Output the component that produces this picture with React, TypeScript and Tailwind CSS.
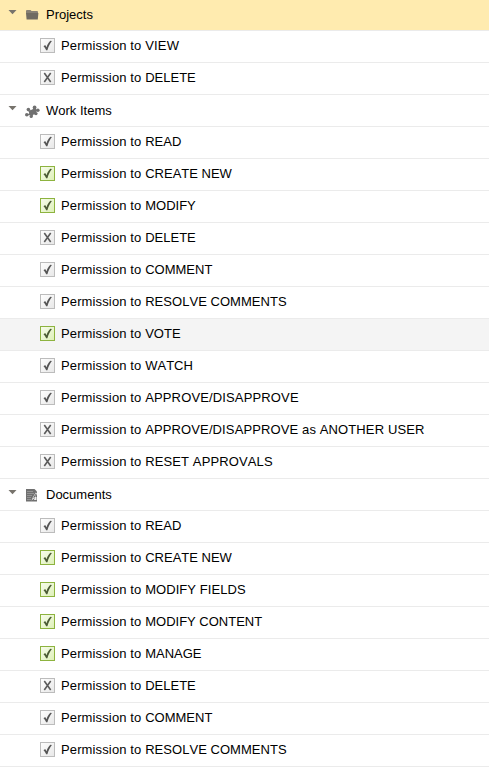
import React from "react";

type State = "check" | "granted" | "denied";
type Item = { label: string; state: State; hover?: boolean; tracking?: string };
type Group = { name: string; icon: React.ReactNode; selected?: boolean; items: Item[] };

function FolderIcon() {
  return (
    <svg width="16" height="14" viewBox="0 0 16 14" className="block">
      <path d="M2 4V2Q2 1 3 1h3.5l1 1H13q1 0 1 1V4z" fill="#888175" />
      <path d="M2 4h12.4L13.8 10.6H2.6z" fill="#706b62" />
    </svg>
  );
}

function PuzzleIcon() {
  return (
    <svg width="16" height="14" viewBox="0 0 16 14" className="block" fill="#707070">
      <path d="M4.6 5.8 8.4 4.6 9.6 2.8 12 4 13.8 5.6 12 7 12.6 9.4 9.4 9.6 8.2 11.8 5.6 10.2 3 10.2 5.2 8.2z" />
      <circle cx="10.6" cy="2.4" r="1.9" />
      <circle cx="13.9" cy="5.2" r="1.7" />
      <circle cx="4.4" cy="4.6" r="1.8" />
      <circle cx="2.8" cy="9.8" r="1.8" />
      <circle cx="7.2" cy="11.5" r="1.6" />
      <circle cx="12" cy="8.6" r="1.6" />
    </svg>
  );
}

function DocumentIcon() {
  return (
    <svg width="16" height="14" viewBox="0 0 16 14" className="block">
      <path d="M2 0h8.5L13 2.5V12.5H2z" fill="#707070" />
      <path d="M3 2.5h6M3 4.5h7M3 6.5h5M3 8.5h4M3 10.5h4" stroke="#a5a5a5" strokeWidth=".7" />
      <path d="M7.5 11.4 9 8l2.8-4.5 1.4 1L10.6 9z" fill="#eeeeee" />
      <path d="m9.2 8.5 2.7-4 .7.5-2.4 4z" fill="#666666" />
      <path d="M11 8h1.5v3H10z" fill="#eeeeee" />
    </svg>
  );
}

const groups: Group[] = [
  {
    name: "Projects",
    icon: <FolderIcon />,
    selected: true,
    items: [
      { label: "VIEW", state: "check", tracking: "tracking-[0.2px]" },
      { label: "DELETE", state: "denied" },
    ],
  },
  {
    name: "Work Items",
    icon: <PuzzleIcon />,
    items: [
      { label: "READ", state: "check" },
      { label: "CREATE NEW", state: "granted" },
      { label: "MODIFY", state: "granted" },
      { label: "DELETE", state: "denied" },
      { label: "COMMENT", state: "check" },
      { label: "RESOLVE COMMENTS", state: "check", tracking: "tracking-[0.04px]" },
      { label: "VOTE", state: "granted", hover: true },
      { label: "WATCH", state: "check" },
      { label: "APPROVE/DISAPPROVE", state: "check", tracking: "tracking-[0.14px]" },
      { label: "APPROVE/DISAPPROVE as ANOTHER USER", state: "denied", tracking: "tracking-[0.12px]" },
      { label: "RESET APPROVALS", state: "denied", tracking: "tracking-[0.12px]" },
    ],
  },
  {
    name: "Documents",
    icon: <DocumentIcon />,
    items: [
      { label: "READ", state: "check" },
      { label: "CREATE NEW", state: "granted" },
      { label: "MODIFY FIELDS", state: "granted", tracking: "tracking-[0.06px]" },
      { label: "MODIFY CONTENT", state: "granted" },
      { label: "MANAGE", state: "granted" },
      { label: "DELETE", state: "denied" },
      { label: "COMMENT", state: "check" },
      { label: "RESOLVE COMMENTS", state: "check", tracking: "tracking-[0.04px]" },
    ],
  },
];

function StateBox({ state }: { state: State }) {
  const tone =
    state === "granted"
      ? "border-[#8db33f] from-[#f7fcec] to-[#def0b8]"
      : "border-[#bcbcbc] from-[#fefefe] to-[#e8e8e8]";
  return (
    <span className={`block size-[15px] shrink-0 border bg-linear-to-br ${tone}`}>
      <svg width="13" height="13" viewBox="0 0 13 13" className="block">
        {state === "denied" ? (
          <path d="M3.3 2 9.7 11M9.7 2 3.3 11" stroke="#5c5c5c" strokeWidth="1.6" fill="none" />
        ) : (
          <path
            d="M2.5 7.3 4.2 6.1 5.5 8.2C6.5 5.3 7.7 3.2 9.4 1.8L10.9 1.9C8.9 4.5 7.5 7.3 6.4 11.2H5.1C4.5 9.5 3.5 8.3 2.5 7.3z"
            fill={state === "granted" ? "#4b5b35" : "#555555"}
          />
        )}
      </svg>
    </span>
  );
}

function GroupRow({ group }: { group: Group }) {
  return (
    <div className={`flex h-8 items-start border-b border-[#ebebeb] ${group.selected ? "bg-[#ffebaf]" : ""}`}>
      <svg width="9" height="5" viewBox="0 0 9 5" className="mt-[11px] ml-2 block">
        <path d="M.5 0h8L4.5 4.2z" fill="#77736c" />
      </svg>
      <span className="mt-2.5 ml-[7px] block w-4">{group.icon}</span>
      <span className="mt-2 ml-1.5 leading-4">{group.name}</span>
    </div>
  );
}

function PermissionRow({ item }: { item: Item }) {
  return (
    <div className={`flex h-8 items-start border-b border-[#ebebeb] pt-[7px] pl-10 ${item.hover ? "bg-[#f4f4f4]" : ""}`}>
      <StateBox state={item.state} />
      <span className="ml-1.5 leading-4 whitespace-pre">
        <span className="tracking-[0.13px]">Permission to </span>
        <span className={item.tracking}>{item.label}</span>
      </span>
    </div>
  );
}

export default function App() {
  return (
    <div className="h-[773px] overflow-hidden bg-white font-['Liberation_Sans',Arial,sans-serif] text-[13px] text-black [font-kerning:none]">
      <div className="-mt-px">
        {groups.map((group) => (
          <section key={group.name}>
            <GroupRow group={group} />
            {group.items.map((item) => (
              <PermissionRow key={item.label} item={item} />
            ))}
          </section>
        ))}
      </div>
    </div>
  );
}
